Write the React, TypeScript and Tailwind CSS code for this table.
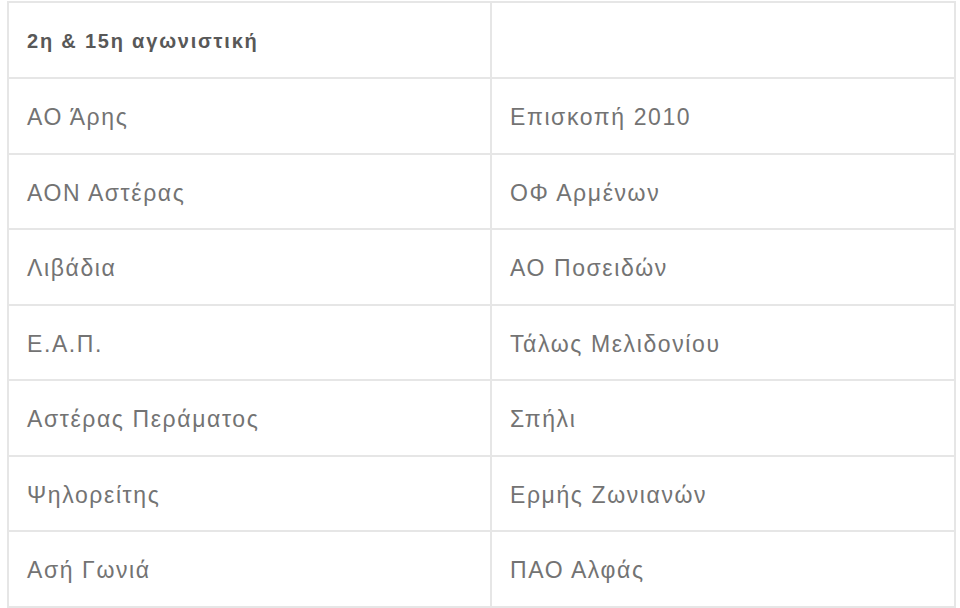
const rows: [string, string][] = [
  ["ΑΟ Άρης", "Επισκοπή 2010"],
  ["ΑΟΝ Αστέρας", "ΟΦ Αρμένων"],
  ["Λιβάδια", "ΑΟ Ποσειδών"],
  ["Ε.Α.Π.", "Τάλως Μελιδονίου"],
  ["Αστέρας Περάματος", "Σπήλι"],
  ["Ψηλορείτης", "Ερμής Ζωνιανών"],
  ["Ασή Γωνιά", "ΠΑΟ Αλφάς"],
];

export default function App() {
  return (
    <main className="w-[960px] h-[608px] bg-white overflow-hidden font-['Liberation_Sans',sans-serif]">
      <div className="ml-[7px] mt-[1px] w-[949px] border-2 border-[#e6e6e6] border-b-0">
        <div className="grid grid-cols-[483px_1fr] h-[76px] border-b-2 border-[#e6e6e6]">
          <div className="flex items-center pl-[18px] pt-[2px] border-r-2 border-[#e6e6e6] text-[20px] tracking-[1.8px] font-bold text-[#585858]">
            2η &amp; 15η αγωνιστική
          </div>
          <div />
        </div>
        {rows.map(([home, away]) => (
          <div
            key={home}
            className="grid grid-cols-[483px_1fr] h-[75.5px] border-b-2 border-[#e6e6e6] text-[23px] tracking-[1.6px] text-[#737373]"
          >
            <div className="flex items-center pl-[18px] pt-[3px] border-r-2 border-[#e6e6e6]">{home}</div>
            <div className="flex items-center pl-[18px] pt-[3px]">{away}</div>
          </div>
        ))}
      </div>
    </main>
  );
}
